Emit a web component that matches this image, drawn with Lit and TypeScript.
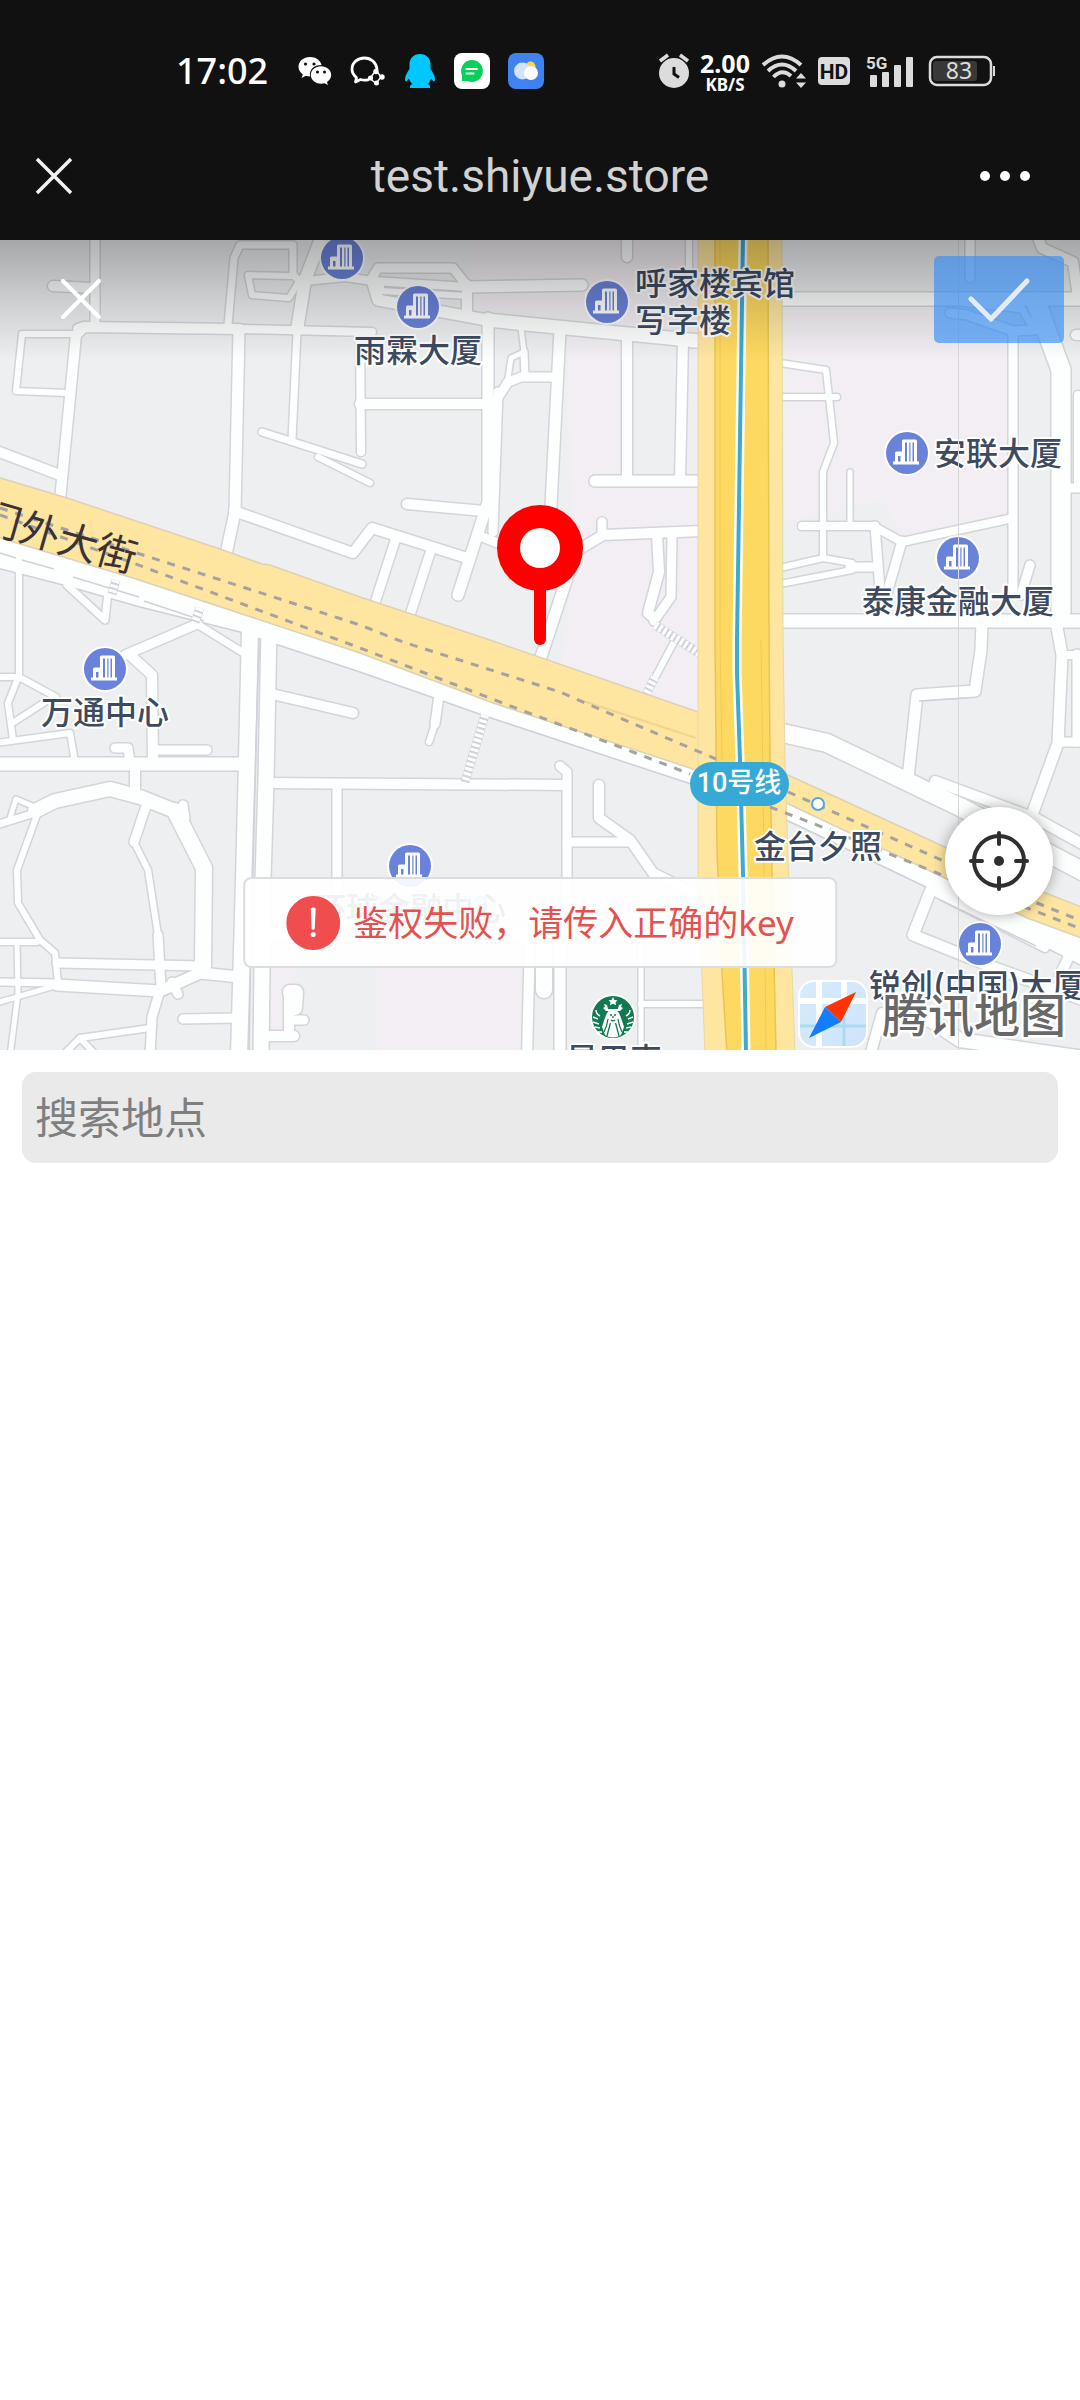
import { LitElement, html, svg, css } from "lit";
import { customElement, state } from "lit/decorators.js";

type Road = [number, string];

/* Minor streets: [width, polyline points] in map units. */
const ROADS: Road[] = [
  [9, "95,236 95,325"],
  [10, "53,286 92,288"],
  [10, "78,329 84,327 240,329"],
  [8, "240,329 372,332"],
  [10, "84,327 76,335 60,500"],
  [6, "72,334 22,334 16,391 67,393"],
  [10, "-6,450 60,475"],
  [11, "239,330 235,512 226,554"],
  [10, "234,511 353,553 372,528 467,558"],
  [9, "396,538 374,606"],
  [9, "431,550 409,618"],
  [11, "488,318 488,502 458,595"],
  [9, "498,392 493,532"],
  [10, "407,504 484,511"],
  [10, "360,404 488,404"],
  [8, "360,334 361,452"],
  [7, "262,432 362,464"],
  [6, "318,457 370,483"],
  [7, "297,332 292,440"],
  [7, "228,325 234,258 240,245 293,245 293,275 305,285"],
  [6, "290,276 248,275 252,295 289,298 298,283"],
  [12, "322,236 305,280 297,330"],
  [8, "305,281 345,277 373,281"],
  [9, "372,278 378,268 453,268 468,287"],
  [11, "468,287 582,285"],
  [8, "374,281 468,287"],
  [6, "380,284 382,291 468,296"],
  [11, "372,280 378,300 487,320"],
  [10, "467,285 467,316"],
  [13, "487,320 587,330 700,341"],
  [5, "521,328 524,352 511,358 508,378"],
  [7, "524,352 525,377"],
  [9, "557,377 521,377 508,382 495,402"],
  [11, "560,330 551,505 552,540"],
  [11, "568,575 540,660"],
  [10, "627,338 627,480"],
  [11, "595,481 702,481"],
  [10, "683,342 680,480"],
  [5, "692,345 702,345"],
  [10, "627,236 627,257"],
  [6, "689,236 689,280"],
  [10, "575,552 603,535 702,531"],
  [9, "602,522 602,535"],
  [9, "480,536 505,546"],
  [10, "657,535 659,572 648,613 655,619"],
  [9, "672,535 671,597 654,621"],
  [6, "675,640 656,676"],
  [13, "780,299 1084,299"],
  [9, "970,236 970,278"],
  [10, "1038,238 1042,248 1073,262 1078,297"],
  [19, "1036,302 1061,370 1061,612"],
  [9, "950,313 967,315 1013,331 1035,330"],
  [7, "967,303 1022,309 1033,328"],
  [9, "1013,333 1013,592"],
  [10, "1076,335 1090,335"],
  [8, "1078,395 1078,486"],
  [9, "1062,488 1084,488"],
  [6, "780,363 826,370 834,443 823,472 823,556"],
  [6, "780,397 837,397"],
  [5, "850,472 850,525"],
  [8, "802,526 873,526 902,542 1013,518"],
  [9, "875,526 880,590"],
  [9, "902,541 888,590"],
  [6, "780,568 823,558 852,563"],
  [6, "780,584 852,570"],
  [9, "850,567 876,567"],
  [9, "1030,565 1021,595"],
  [13, "780,621 1084,621"],
  [11, "982,622 981,650 975,691 917,695 908,778"],
  [11, "1056,622 1062,655 1058,743 1033,812"],
  [8, "1062,655 1084,655"],
  [9, "1058,742 1084,742"],
  [9, "1077,654 1077,742"],
  [18, "778,732 827,743 960,807 1084,872"],
  [10, "935,781 1035,818 1084,845"],
  [11, "932,887 913,935 1000,970 1084,1000"],
  [8, "937,893 1045,948"],
  [10, "1072,950 1060,975"],
  [14, "915,1010 960,1040 1084,1058"],
  [10, "882,1013 870,1056"],
  [16, "250,630 247,760 244,880 239,1056"],
  [15, "269,630 266,780 263,880 261,1056"],
  [13, "-6,764 244,764"],
  [10, "266,783 566,785"],
  [9, "337,785 337,940"],
  [9, "560,766 567,772 567,935"],
  [10, "599,785 599,818 630,840 653,873 693,893"],
  [9, "567,842 630,842"],
  [9, "439,695 435,724"],
  [6, "435,724 429,742"],
  [10, "272,694 353,713"],
  [9, "125,655 197,624"],
  [7, "197,624 242,652"],
  [10, "130,655 152,675 153,762"],
  [6, "19,570 19,677"],
  [6, "-4,677 19,677 56,697"],
  [6, "18,678 8,703 13,740"],
  [6, "-4,743 70,733 75,762"],
  [6, "14,722 45,702"],
  [7, "67,585 105,620 108,592"],
  [9, "115,748 128,748 130,762"],
  [9, "153,750 207,750"],
  [10, "135,764 135,795"],
  [7, "-4,825 35,813"],
  [14, "35,811 55,801 110,789 140,797 175,811"],
  [16, "175,811 204,868 203,966"],
  [9, "183,805 185,818"],
  [6, "37,815 17,870 18,903 40,940 55,953 58,983"],
  [5, "37,808 16,799 10,818"],
  [9, "147,803 134,842"],
  [6, "134,842 148,870 158,935"],
  [9, "158,935 161,987 152,1017 150,1056"],
  [6, "-4,942 37,942"],
  [5, "17,943 18,993 10,1056"],
  [7, "-4,982 57,983"],
  [11, "57,985 160,991 200,973 240,977"],
  [9, "57,963 203,966"],
  [5, "-4,1003 55,986"],
  [9, "183,1019 236,1018"],
  [9, "178,994 172,982"],
  [6, "150,1028 80,1038 64,1054"],
  [6, "80,1038 95,1054"],
  [14, "290,992 296,992 295,1008"],
  [10, "289,995 289,1034"],
  [9, "289,1020 304,1020"],
  [10, "264,1036 294,1036"],
  [13, "266,935 700,935"],
  [10, "530,935 527,1056"],
  [11, "560,935 560,1056"],
  [16, "544,940 544,990"],
  [5, "641,935 641,1056"],
  [6, "641,1004 708,1004"],
];

const STAIRS = [
  "655,625 705,657",
  "655,677 642,703",
  "485,715 465,782",
  "116,580 112,594",
  "200,608 195,622",
];

const PINK = [
  "566,330 622,340 622,475 702,475 702,715 560,672 575,560",
  "470,240 700,240 700,330 470,308",
  "784,306 1010,306 1010,515 904,535 880,500 784,522",
  "377,942 524,942 522,1050 377,1050",
  "272,942 300,942 284,1028 270,1030",
];

const BUILDINGS: [number, number][] = [
  [342, 258], [418, 307], [607, 302], [907, 453],
  [958, 558], [105, 669], [410, 866], [980, 944],
];

type Label = [string, number, number, "start" | "middle"];
const LABELS: Label[] = [
  ["雨霖大厦", 418, 362, "middle"],
  ["呼家楼宾馆", 635, 295, "start"],
  ["写字楼", 635, 332, "start"],
  ["安联大厦", 934, 465, "start"],
  ["泰康金融大厦", 958, 613, "middle"],
  ["万通中心", 105, 724, "middle"],
  ["环球金融中心", 410, 920, "middle"],
  ["金台夕照", 818, 858, "middle"],
  ["锐创(中国)大厦", 869, 997, "start"],
  ["星巴克", 614, 1071, "middle"],
];

@customElement("city-map")
export class CityMap extends LitElement {
  static styles = css`
    :host { display: block; }
    .map { display: block; width: 100%; height: auto; }
    .case, .fill { fill: none; stroke-linecap: round; stroke-linejoin: round; }
    .case { stroke: #d3d5da; }
    .fill { stroke: #fdfefe; }
    .label {
      font: 500 32px Inter, "Noto Sans CJK SC", sans-serif;
      fill: #3d4a60;
      stroke: #fff;
      stroke-width: 4px;
      stroke-linejoin: round;
      paint-order: stroke;
    }
    .street {
      font: 400 40px "Noto Sans CJK SC", sans-serif;
      fill: #3a3336;
    }
    .line { font: 500 27px Roboto, "Noto Sans CJK SC", sans-serif; fill: #fff; }
    .brand {
      font: 500 46px "Noto Sans CJK SC", sans-serif;
      fill: #686868;
      stroke: #fff;
      stroke-width: 5px;
      stroke-linejoin: round;
      paint-order: stroke;
    }
  `;

  private building([x, y]: [number, number]) {
    return svg`<g transform="translate(${x} ${y})">
      <circle r="23" fill="#fff" opacity=".85"></circle>
      <circle r="21" fill="#6a83da"></circle>
      <path fill="#fff" d="M-14 8.500H-12V0q0-1.500 1.500-1.500H-5V-12q0-1.500 1.500-1.500H8.500q1.500 0 1.500 1.500V8.500h2V11.500h-26z"></path>
      <path fill="#6a83da" d="M-9 3h2.500v5.500H-9zM-2 -10.500h2v19h-2zM2.300 -10.500h1.200v19H2.300zM5.500 -10.500h1.500v19H5.500z"></path>
    </g>`;
  }

  private siren() {
    return svg`<g transform="translate(613 1017)">
      <circle r="23" fill="#fff" opacity=".9"></circle>
      <circle r="21" fill="#127a50"></circle>
      <path fill="#fff" d="M0-20l1.500 3 3 .3-2 2 .6 3-3.100-1.500-3.100 1.500.6-3-2-2 3-.3zM-9-13l3 1 1 4h10l1-4 3-1-1 3 2 1-3 3H-7l-3-3 2-1z"></path>
      <path fill="#fff" d="M-6-4Q0-12 6-4q3 7 5 14l-3 8q-8 5-16 0l-3-8q2-7 5-14z"></path>
      <path fill="none" stroke="#127a50" stroke-width="1.300" d="M-5 2q-1 7-4 13M-2.500 6q-2 7-3.500 13M5 2q1 7 4 13M2.500 6q2 7 3.500 13M-2 3q2 1.500 4 0M-3-2h2M1-2h2M0-1v2"></path>
      <path fill="none" stroke="#fff" stroke-width="1.500" d="M-20 0l5 2M-20 5l6 2M-18 10l5 1M-15 15l4 0M20 0l-5 2M20 5l-6 2M18 10l-5 1M15 15l-4 0M-17-7q0 4 4 6M17-7q0 4-4 6"></path>
    </g>`;
  }

  render() {
    return html`<svg class="map" viewBox="0 240 1080 810" role="img" aria-label="地图">
      <defs>
        <linearGradient id="shade" x1="0" y1="0" x2="0" y2="1">
          <stop offset="0" stop-color="#000" stop-opacity=".3"></stop>
          <stop offset=".5" stop-color="#000" stop-opacity=".14"></stop>
          <stop offset="1" stop-color="#000" stop-opacity="0"></stop>
        </linearGradient>
        <linearGradient id="tile" x1="0" y1="0" x2="1" y2="1">
          <stop offset="0" stop-color="#d5ecfb"></stop>
          <stop offset="1" stop-color="#cfe4fb"></stop>
        </linearGradient>
      </defs>
      <rect x="0" y="240" width="1080" height="810" fill="#edeff1"></rect>
      ${PINK.map((p) => svg`<polygon points=${p} fill="#f2eef3"></polygon>`)}
      ${ROADS.map(([w, p]) => svg`<polyline class="case" stroke-width=${w + 3} points=${p}></polyline>`)}
      <polygon fill="#fdfefe" stroke="#cfd1d8" stroke-width="1.500"
        points="-3,530 360,640 700,760 700,787 688,783 488,717 360,672 278,645 240,632 140,607 63,585 -3,568"></polygon>
      <polygon fill="#fdfefe" stroke="#cfd1d8" stroke-width="1.500"
        points="780,795 1084,930 1084,967 930,889 780,817"></polygon>
      ${ROADS.map(([w, p]) => svg`<polyline class="fill" stroke-width=${w} points=${p}></polyline>`)}
      <g fill="none" stroke="#d0d2d9" stroke-width="1.500">
        <path d="M919 701L967 698M259 640L252 880 249 1050M0 553l16 5M22 560l32 9M73 577l66 20M144 601l60 20M259 638v22M940 900l96 46"></path>
      </g>
      ${STAIRS.map((p) => svg`
        <polyline points=${p} fill="none" stroke="#d0d2d9" stroke-width="9"></polyline>
        <polyline points=${p} fill="none" stroke="#fff" stroke-width="8" stroke-dasharray="3 2"></polyline>`)}

      <polygon fill="#fee5a0" stroke="#dcd2b8" stroke-width="1.500"
        points="-3,477 67,498 217,548 262,564 270,565 360,597 490,640 698,712 710,716 710,775 690,768 493,703 360,653 133,578 -3,537"></polygon>
      <polygon fill="#fee5a0" stroke="#dcd2b8" stroke-width="1.500"
        points="780,770 788,775 947,848 1043,892 1084,908 1084,939 1027,918 947,879 780,800"></polygon>
      <path d="M580 700L696 738" stroke="#efd590" stroke-width="2" fill="none"></path>
      <polygon fill="#fee5a0" stroke="#e8d8a8" stroke-width="1"
        points="698,236 698,873 705,1054 795,1054 788,860 785,760 783,640 782,236"></polygon>
      <path fill="#fed961" stroke="#e8c45a" stroke-width="1.500"
        d="M715 236V640L717 850 722 973 727 1054H776L772 870 770 760 769 640 768 236z"></path>
      <path d="M761 640L764 860 766 1050M720 240V640L722 760" fill="none" stroke="#f0ca55" stroke-width="1"></path>
      <g fill="none" stroke="#a6a2a4" stroke-width="3" stroke-dasharray="8 8">
        <polyline points="0,508 143,555 283,600 360,625 403,642 560,692 620,718 716,759"></polyline>
        <polyline points="0,515 133,563 360,648 513,707 620,747 690,774"></polyline>
        <polyline points="788,792 937,858 1037,903 1084,922"></polyline>
        <polyline points="770,807 830,830 937,873 1084,930"></polyline>
      </g>
      <polyline fill="none" stroke="#fff" stroke-width="9" points="743,236 737,640 737,673 740,760 743,873 746,1054"></polyline>
      <polyline fill="none" stroke="#3fa9cf" stroke-width="4" points="743,236 737,640 737,673 740,760 743,873 746,1054"></polyline>
      <circle cx="818" cy="804" r="6" fill="#fff" stroke="#54a7e0" stroke-width="2"></circle>

      ${BUILDINGS.map((b) => this.building(b))}
      ${this.siren()}
      ${LABELS.map(([t, x, y, a]) => svg`<text class="label" x=${x} y=${y} text-anchor=${a}>${t}</text>`)}
      <text class="street" transform="translate(132 573) rotate(16)" text-anchor="end">门外大街</text>
      <rect x="690" y="762" width="99" height="44" rx="22" fill="#36a9d7"></rect>
      <text class="line" x="739" y="792" text-anchor="middle">10号线</text>
      <path d="M958.500 240V1050" stroke="#d9d9dc" stroke-width="1"></path>
      <rect x="0" y="240" width="1080" height="120" fill="url(#shade)"></rect>

      <g>
        <rect x="798" y="980" width="70" height="68" rx="16" fill="#fff"></rect>
        <rect x="800" y="982" width="66" height="64" rx="14" fill="url(#tile)"></rect>
        <path d="M819 982v64M800 1001h66M844 982v24" stroke="#fff" stroke-width="6" fill="none"></path>
        <path d="M800 1026h66M844 1006v40" stroke="#a9dcf2" stroke-width="3" fill="none"></path>
        <path d="M856 992L841 1022 825 1007z" fill="#ff3304"></path>
        <path d="M809 1038L825 1007 841 1022z" fill="#137cff"></path>
      </g>
      <text class="brand" x="882" y="1032">腾讯地图</text>

      <g>
        <rect x="534" y="585" width="12" height="60" rx="6" fill="#f00"></rect>
        <circle cx="540" cy="548" r="43" fill="#f00"></circle>
        <circle cx="540" cy="548" r="20" fill="#fff"></circle>
      </g>
    </svg>`;
  }
}

@customElement("status-bar")
export class StatusBar extends LitElement {
  static styles = css`
    :host {
      display: flex;
      justify-content: space-between;
      align-items: center;
      height: 46px;
      padding: 48px 84px 18px 176px;
      color: #fff;
    }
    .group { display: flex; align-items: center; }
    .left { gap: 18px; }
    .right { gap: 10px; }
    svg { display: block; flex: none; }
    .time { font: 500 36px/46px "Noto Sans", sans-serif; margin-right: 12px; }
    .speed {
      display: flex;
      flex-direction: column;
      align-items: center;
      width: 50px;
      font: 700 25px/28px "Noto Sans", sans-serif;
      white-space: nowrap;
    }
    .unit { font-size: 17px; line-height: 16px; }
    .hd { font: 700 21px "Roboto", sans-serif; fill: #111; }
    .gen { font: 700 17px "Roboto", sans-serif; fill: #dcdcdc; }
    .charge { font: 400 23px "Noto Sans", sans-serif; fill: #dcdcdc; }
  `;

  render() {
    return html`
      <div class="group left">
        <span class="time">17:02</span>
        <svg width="34" height="30" viewBox="0 0 34 30">
          <path fill="#fff" d="M12 1C5.400 1 .5 5.300.5 10.800c0 3.200 1.700 5.800 4.300 7.600L3.600 22l4.300-2.200c1.400.4 2.600.6 4.100.6C11 13.500 16 9 23.500 9 22.500 4.300 17.800 1 12 1z"></path>
          <path fill="#fff" d="M23 10.300c-5.700 0-10.200 3.900-10.200 8.700s4.500 8.700 10.200 8.700c1.300 0 2.500-.2 3.600-.5l3.300 1.800-.9-3c2.500-1.700 4.200-4 4.200-7 0-4.800-4.500-8.700-10.200-8.700z"></path>
          <g fill="#111"><circle cx="7.500" cy="8" r="1.600"></circle><circle cx="16" cy="8" r="1.600"></circle><circle cx="19.500" cy="16" r="1.500"></circle><circle cx="26.500" cy="16" r="1.500"></circle></g>
        </svg>
        <svg width="36" height="30" viewBox="0 0 36 30" fill="none">
          <path d="M27 13C26 6.500 21 2 14.500 2 7.500 2 2 6.800 2 13c0 3.500 1.800 6.500 4.500 8.500L5.500 26l5-2.500c2.500.8 5 .8 7.500.3" stroke="#fff" stroke-width="2.800" stroke-linecap="round" stroke-linejoin="round"></path>
          <path d="M26 14l5 7-5 6.500-6-5z" stroke="#fff" stroke-width="1.400"></path>
          <g fill="#fff"><circle cx="26" cy="15.500" r="2.700"></circle><circle cx="32" cy="21" r="2.700"></circle><circle cx="26.500" cy="27" r="2.500"></circle><circle cx="20.500" cy="22" r="2.600"></circle></g>
        </svg>
        <svg width="32" height="36" viewBox="0 0 32 36">
          <path fill="#00c8ff" d="M16 1C9.500 1 5.500 5.600 5.500 11v5C3.500 19 1 22.500 1 26.500c0 2 1 2 1.800 1.400L5 25.500c.6 2.200 1.800 4.200 3.500 5.500-2 .7-3 1.800-2.500 4h20c.5-2.200-.5-3.300-2.500-4 1.700-1.300 2.900-3.300 3.500-5.500l2.200 2.400c.8.600 1.800.6 1.800-1.400 0-4-2.500-7.500-4.500-10.500v-5C26.500 5.600 22.500 1 16 1z"></path>
        </svg>
        <svg width="36" height="36" viewBox="0 0 36 36">
          <rect width="36" height="36" rx="8" fill="#fff"></rect>
          <path fill="#0bcf5b" d="M18 7a11 11 0 1 1-4 21.300L8 28v-5.500A11 11 0 0 1 18 7z"></path>
          <path d="M12.500 16H23M12.500 20.500h7" stroke="#fff" stroke-width="2" stroke-linecap="round"></path>
        </svg>
        <svg width="36" height="36" viewBox="0 0 36 36">
          <rect width="36" height="36" rx="8" fill="#4083f0"></rect>
          <circle cx="22.500" cy="13.500" r="5" fill="#f8d84a"></circle>
          <circle cx="14.500" cy="18" r="8.500" fill="#d5e2fb"></circle>
          <circle cx="23" cy="20" r="7" fill="#fff"></circle>
        </svg>
      </div>
      <div class="group right">
        <svg width="32" height="36" viewBox="0 0 32 36">
          <circle cx="16" cy="20" r="15" fill="#dcdcdc"></circle>
          <path d="M16 14v7l5 3.500" stroke="#111" stroke-width="3" fill="none"></path>
          <path d="M2 8l8-6M30 8l-8-6" stroke="#dcdcdc" stroke-width="3.500"></path>
        </svg>
        <div class="speed"><span>2.00</span><span class="unit">KB/S</span></div>
        <svg width="48" height="36" viewBox="0 0 48 36">
          <g fill="none" stroke="#dcdcdc" stroke-width="4">
            <path d="M3 12Q22-5 41 12"></path><path d="M8 18Q22 5 36 18"></path><path d="M13.500 24Q22 15 31 23"></path>
          </g>
          <circle cx="22" cy="31" r="3.500" fill="#dcdcdc"></circle>
          <path fill="#dcdcdc" d="M41 20l5 5.500H36zM41 35l-5-5.500h10z"></path>
        </svg>
        <svg width="36" height="32" viewBox="0 0 36 32">
          <rect y="2" width="32" height="28" rx="4" fill="#dcdcdc"></rect>
          <text class="hd" x="16" y="24" text-anchor="middle">HD</text>
        </svg>
        <svg width="54" height="36" viewBox="0 0 54 36">
          <g fill="#dcdcdc"><rect x="6" y="22" width="7" height="12" rx="1"></rect><rect x="18" y="19" width="7" height="15" rx="1"></rect><rect x="30" y="12" width="7" height="22" rx="1"></rect><rect x="42" y="4" width="7" height="30" rx="1"></rect></g>
          <text class="gen" x="2" y="16">5G</text>
        </svg>
        <svg width="68" height="32" viewBox="0 0 68 32">
          <rect x="2" y="2" width="61" height="28" rx="7" fill="none" stroke="#dcdcdc" stroke-width="2.500"></rect>
          <rect x="5" y="6" width="44" height="20" rx="3" fill="#383838"></rect>
          <path d="M66 11v10" stroke="#dcdcdc" stroke-width="2"></path>
          <text class="charge" x="31" y="24" text-anchor="middle">83</text>
        </svg>
      </div>`;
  }
}

@customElement("app-root")
export class AppRoot extends LitElement {
  static styles = css`
    :host {
      display: block;
      min-height: 100vh;
      background: #fff;
      font-family: "Noto Sans", "Noto Sans CJK SC", sans-serif;
    }
    button { border: 0; padding: 0; margin: 0; background: none; cursor: pointer; }
    svg { display: block; }
    .top { background: #111; }
    .nav {
      display: grid;
      grid-template-columns: 108px 1fr 108px;
      align-items: center;
      height: 128px;
      box-sizing: border-box;
    }
    .title {
      margin: 0;
      text-align: center;
      font: 400 46px/60px Roboto, "Noto Sans", sans-serif;
      color: #d2d2d2;
    }
    .nav-btn { display: flex; align-items: center; justify-content: center; height: 100px; }
    .more { justify-content: flex-start; }
    .stage { position: relative; overflow: hidden; }
    .cancel { position: absolute; left: 16px; top: 15px; width: 130px; height: 87px; display: grid; place-items: center; }
    .confirm {
      position: absolute;
      right: 16px;
      top: 16px;
      width: 130px;
      height: 87px;
      display: grid;
      place-items: center;
      border-radius: 5px;
      background: rgba(56, 142, 245, 0.66);
    }
    .locate {
      position: absolute;
      right: 27px;
      bottom: 135px;
      width: 108px;
      height: 108px;
      display: grid;
      place-items: center;
      border-radius: 50%;
      background: #fff;
      box-shadow: 0 0 14px rgba(0, 0, 0, 0.35);
    }
    .toast {
      position: absolute;
      left: 50%;
      bottom: 82px;
      transform: translateX(-50%);
      display: flex;
      align-items: center;
      gap: 13px;
      box-sizing: border-box;
      height: 91px;
      padding: 0 41px;
      border: 2px solid #dcdddf;
      border-radius: 8px;
      background: rgba(255, 255, 255, 0.92);
      color: #e2524f;
      font-size: 35px;
      line-height: 48px;
      white-space: nowrap;
    }
    .search { display: block; padding: 22px; }
    .box {
      display: block;
      box-sizing: border-box;
      width: 100%;
      height: 91px;
      padding: 0 13px 6px;
      border: 0;
      border-radius: 14px;
      outline: 0;
      background: #eaeaea;
      color: #333;
      font: 400 43px/60px "Noto Sans CJK SC", sans-serif;
    }
    .box::placeholder { color: #7f7f7f; opacity: 1; }
  `;

  @state() private query = "";

  render() {
    return html`
      <header class="top">
        <status-bar></status-bar>
        <div class="nav">
          <button class="nav-btn" aria-label="关闭">
            <svg width="38" height="38" viewBox="0 0 38 38"><path d="M2 2l34 34M36 2L2 36" stroke="#f2f2f2" stroke-width="3.500"></path></svg>
          </button>
          <h1 class="title">test.shiyue.store</h1>
          <button class="nav-btn more" aria-label="更多">
            <svg width="66" height="12" viewBox="0 0 66 12" fill="#fff"><circle cx="13" cy="6" r="5"></circle><circle cx="33" cy="6" r="5"></circle><circle cx="53" cy="6" r="5"></circle></svg>
          </button>
        </div>
      </header>
      <main>
        <section class="stage">
          <city-map></city-map>
          <button class="cancel" aria-label="取消">
            <svg width="40" height="40" viewBox="0 0 40 40"><path d="M2 2l36 36M38 2L2 38" stroke="#fff" stroke-width="4" stroke-linecap="round"></path></svg>
          </button>
          <button class="confirm" aria-label="确定">
            <svg width="64" height="46" viewBox="0 0 64 46"><path d="M4 22l20 20L60 4" fill="none" stroke="#e6ebf2" stroke-width="5" stroke-linecap="round" stroke-linejoin="round"></path></svg>
          </button>
          <button class="locate" aria-label="定位">
            <svg width="62" height="62" viewBox="0 0 62 62" fill="none" stroke="#2f2f2f" stroke-width="4" stroke-linecap="round">
              <circle cx="31" cy="31" r="25"></circle>
              <path d="M31 3v11M31 48v11M3 31h11M48 31h11"></path>
              <circle cx="31" cy="31" r="5" fill="#2f2f2f" stroke="none"></circle>
            </svg>
          </button>
          <div class="toast" role="alert">
            <svg width="54" height="54" viewBox="0 0 54 54">
              <circle cx="27" cy="27" r="27" fill="#ef4d4e"></circle>
              <path d="M24.500 12.500q2.500-2 5 0L28.500 33q-1.500 1.500-3 0z" fill="#fff"></path>
              <circle cx="27" cy="38.500" r="2.500" fill="#fff"></circle>
            </svg>
            <span>鉴权失败，请传入正确的key</span>
          </div>
        </section>
        <label class="search">
          <input class="box" type="text" placeholder="搜索地点" aria-label="搜索地点"
            .value=${this.query}
            @input=${(e: Event) => { this.query = (e.target as HTMLInputElement).value; }} />
        </label>
      </main>`;
  }
}
